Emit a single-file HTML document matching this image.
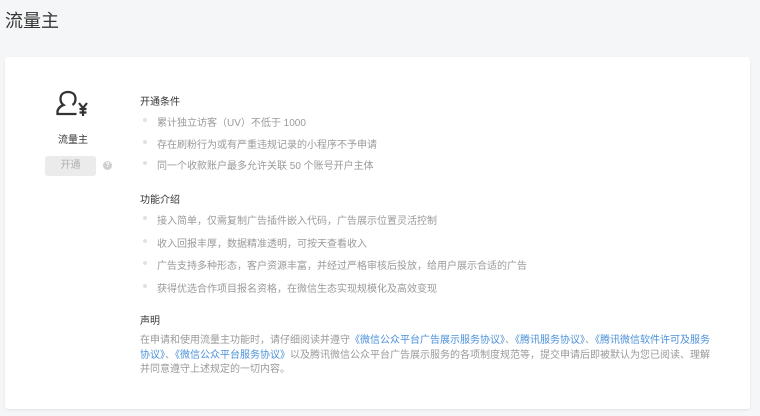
<!DOCTYPE html><html><head><meta charset="utf-8"><style>
body{margin:0;width:760px;height:416px;background:#f5f6f7;font-family:"Liberation Sans","Noto Sans CJK SC",sans-serif;position:relative;overflow:hidden}
.t{position:absolute;left:5px;top:7px;font-size:18px;color:#353535}
.card{position:absolute;left:5px;top:57px;width:745px;height:352px;background:#fff;border-radius:3px;box-shadow:0 1px 2px rgba(0,0,0,.08)}
.a{position:absolute;font-size:10px;white-space:nowrap}
.h{color:#353535}
.i{color:#9a9a9a}
.d{position:absolute;width:4px;height:4px;border-radius:50%;background:#e2e2e2}
.btn{position:absolute;left:45px;top:156px;width:51px;height:20px;background:#ebebeb;border-radius:3px;color:#b0b0b0;font-size:10px;text-align:center;line-height:20px}
.q{position:absolute;left:103px;top:161px;width:9px;height:9px;border-radius:50%;background:#cfcfcf;color:#fff;font-size:7px;line-height:9px;text-align:center;font-weight:bold}
.p{position:absolute;left:140px;top:334px;width:576px;font-size:10px;line-height:14.5px;color:#9a9a9a;word-break:break-all;line-break:anywhere}
.p span{color:#4a90d9}
</style></head><body>
<div class="t">流量主</div>
<div class="card"></div>
<svg style="position:absolute;left:56px;top:89px" width="36" height="30" viewBox="0 0 36 30"><path d="M12 3c-5 0-7.5 3-7.5 7 0 3 1.5 5 3 6 -3 1-5 3-6 6v3h19" fill="none" stroke="#333" stroke-width="2.3"/><path d="M12 3c5 0 7.5 3 7.5 7 0 3-1.5 5-3 6" fill="none" stroke="#333" stroke-width="2.3"/><path d="M23 14l4 5 4-5M27 19v8M23.5 20h7M23.5 23.5h7" fill="none" stroke="#333" stroke-width="2.2"/></svg>
<div class="a h" style="left:58px;top:131px">流量主</div>
<div class="btn">开通</div><div class="q">?</div>
<div class="a h" style="left:140px;top:93px">开通条件</div>
<div class="d" style="left:143px;top:118px"></div><div class="a i" style="left:157px;top:114px">累计独立访客（UV）不低于 1000</div>
<div class="d" style="left:143px;top:140px"></div><div class="a i" style="left:157px;top:136px">存在刷粉行为或有严重违规记录的小程序不予申请</div>
<div class="d" style="left:143px;top:161px"></div><div class="a i" style="left:157px;top:157px">同一个收款账户最多允许关联 50 个账号开户主体</div>
<div class="a h" style="left:140px;top:191px">功能介绍</div>
<div class="d" style="left:143px;top:216px"></div><div class="a i" style="left:157px;top:212px">接入简单，仅需复制广告插件嵌入代码，广告展示位置灵活控制</div>
<div class="d" style="left:143px;top:239px"></div><div class="a i" style="left:157px;top:235px">收入回报丰厚，数据精准透明，可按天查看收入</div>
<div class="d" style="left:143px;top:261px"></div><div class="a i" style="left:157px;top:257px">广告支持多种形态，客户资源丰富，并经过严格审核后投放，给用户展示合适的广告</div>
<div class="d" style="left:143px;top:284px"></div><div class="a i" style="left:157px;top:280px">获得优选合作项目报名资格，在微信生态实现规模化及高效变现</div>
<div class="a h" style="left:140px;top:312px">声明</div>
<div class="p">在申请和使用流量主功能时，请仔细阅读并遵守<span>《微信公众平台广告展示服务协议》</span>、<span>《腾讯服务协议》</span>、<span>《腾讯微信软件许可及服务协议》</span>、<span>《微信公众平台服务协议》</span>以及腾讯微信公众平台广告展示服务的各项制度规范等，提交申请后即被默认为您已阅读、理解并同意遵守上述规定的一切内容。</div>
</body></html>
